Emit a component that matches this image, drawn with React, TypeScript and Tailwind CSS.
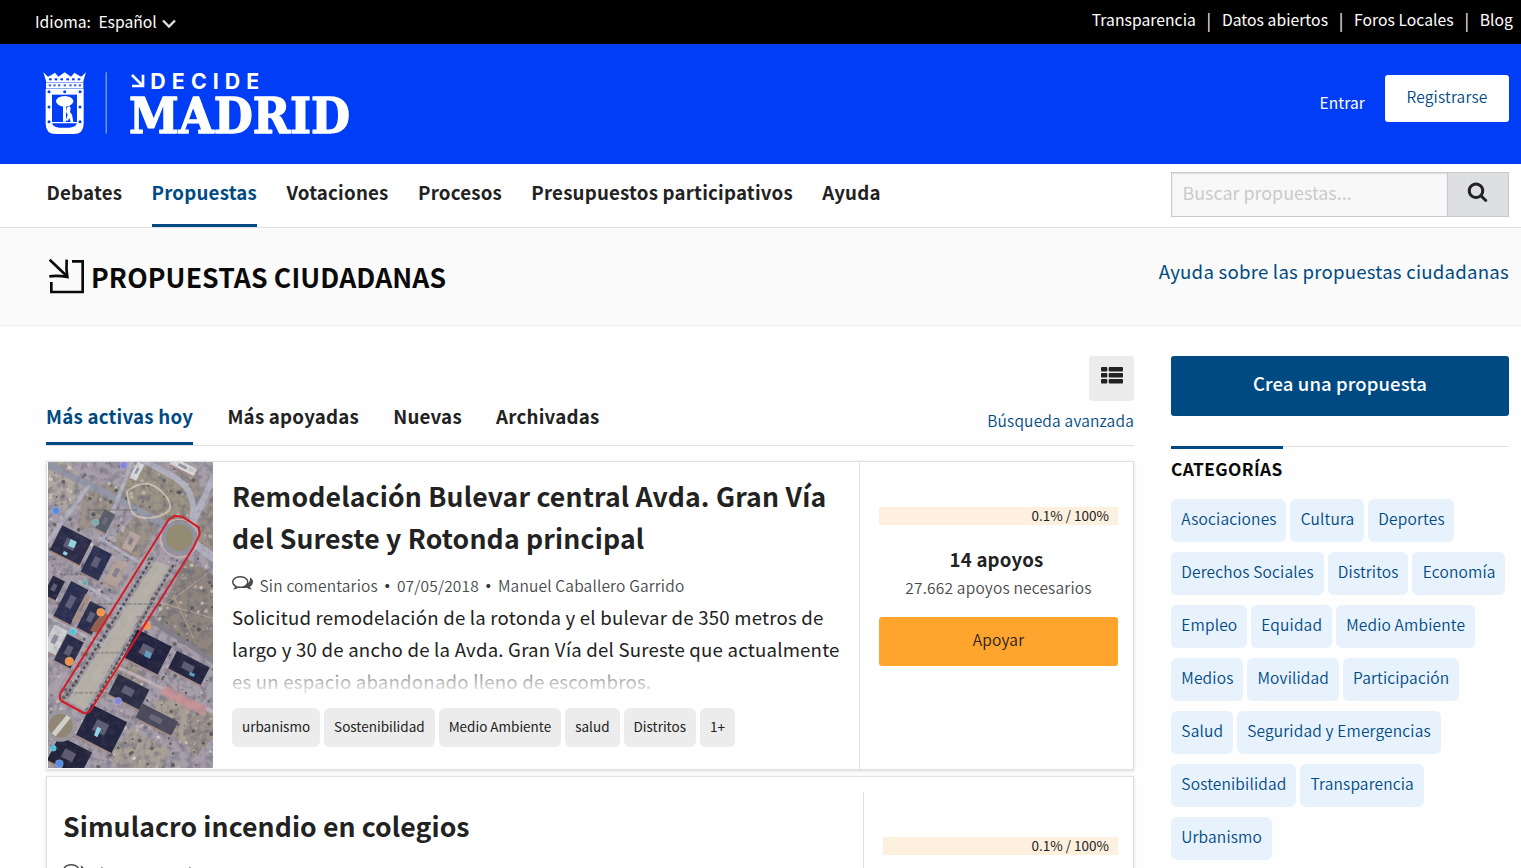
import type { ReactNode } from 'react';

function Logo() {
  return (
    <svg className="block h-[64px] w-[308px] overflow-visible" viewBox="130 214 924 192" role="img" aria-label="Decide Madrid">
      <g fill="#fff">
        <path d="M131 218l14 13 9-4 12-8 10 12 19-13 19 13 10-12 12 8 9 4 14-13-8 26v24H139v-24z" />
        <path d="M138 268h114v104q0 31-31 31h-52q-31 0-31-31z" />
        <rect x="318" y="218" width="3" height="184" opacity=".65" />
      </g>
      <g fill="#003df6">
        <rect x="157" y="285" width="75" height="82" />
        <path d="M157 371h75q-5 13-24 13h-28q-18 0-23-13z" />
        {[146, 239].map((x) => [276, 322, 366].map((y) => <circle key={`${x}-${y}`} cx={x + 2} cy={y} r="4.5" />))}
        <circle cx="195" cy="276" r="4.5" />
        {[152, 169, 186, 204, 221, 238].map((x) => <rect key={x} x={x - 4} y="236" width="8" height="6" />)}
        {[150, 164, 178, 195, 212, 226, 240].map((x) => <rect key={x} x={x - 3} y="254" width="7" height="6" opacity=".8" />)}
        <path d="M139 247h112v2H139zM139 265h112v2H139z" opacity=".6" />
      </g>
      <g fill="#fff">
        <ellipse cx="195" cy="305" rx="26" ry="16" />
        <path d="M190 316h9v50h-9zM201 324l8-5 4 6-2 12 6 8 4 22h-8l-4-12-6 10-4-4 5-16-5-8z" />
      </g>
      <g fill="none" stroke="#fff" strokeWidth="8">
        <path d="M397 226l31 31M430 225v34h-33" />
      </g>
      <text x="452" y="267" fill="#fff" fontFamily="Inter, sans-serif" fontWeight="700" fontSize="64" textLength="327" lengthAdjust="spacing">DECIDE</text>
      <text x="388" y="401" fill="#fff" stroke="#fff" strokeWidth="4" strokeLinejoin="round" fontFamily="'DejaVu Serif Condensed', 'DejaVu Serif', serif" fontWeight="700" fontSize="147" textLength="663" lengthAdjust="spacingAndGlyphs">MADRID</text>
    </svg>
  );
}

const COMMENTS =
  'M704 384q-153 0-286 52t-211.500 141-78.500 191q0 82 53 158t149 132l97 56-35 84q34-20 62-39l44-31 53 10q78 14 153 14 153 0 286-52t211.500-141 78.500-191-78.500-191-211.500-141-286-52zM704 256q191 0 353.500 68.500t256.500 186.500 94 257-94 257-256.500 186.500-353.500 68.500q-86 0-176-16-124 88-278 128-36 9-86 16h-3q-11 0-20.500-8t-11.500-21q-1-3-1-6.500t0.500-6.500 2-6l2.500-5t3.500-5.500 4-5 4.500-5 4-4.500q5-6 23-25t26-29.500 22.500-29 25-38.500 20.500-44q-124-72-195-177t-71-224q0-139 94-257t256.500-186.500 353.500-68.500zM1526 1169q10 24 20.500 44t25 38.500 22.500 29 26 29.500 23 25q1 1 4 4.500t4.500 5 4 5 3.500 5.500l2.500 5t2 6 0.500 6.500-1 6.500q-3 14-13 22t-22 7q-50-7-86-16-154-40-278-128-90 16-176 16-271 0-472-132 58 4 88 4 161 0 309-45t264-129q125-92 192-212t67-254q0-77-23-152 129 71 204 178t75 230q0 120-71 224.500t-195 176.500z';
const SEARCH =
  'M1216 832q0-185-131.5-316.5t-316.500-131.5-316.500 131.500-131.500 316.500 131.500 316.500 316.500 131.500 316.500-131.500 131.500-316.500zM1728 1664q0 52-38 90t-90 38q-54 0-90-38l-343-342q-179 124-399 124-143 0-273.500-55.500t-225-150-150-225-55.500-273.500 55.500-273.500 150-225 225-150 273.500-55.500 273.500 55.500 225 150 150 225 55.500 273.500q0 220-124 399l343 343q37 37 37 90z';

function rnd(i: number) {
  const v = Math.sin(i * 127.1 + 11.7) * 43758.5453;
  return v - Math.floor(v);
}

/* Aerial view of the boulevard, outlined in red */
function AerialView() {
  const specks = Array.from({ length: 620 }, (_, i) => ({
    x: 24 + rnd(i) * 495,
    y: 21 + rnd(i + 900) * 918,
    r: 1.5 + rnd(i + 1800) * 5,
    c: ['#3f4148', '#cbbcb4', '#77707a', '#d2c4c2', '#4c4f45', '#e0d8d4'][i % 6],
  }));
  const blocks: [number, number, number, number, string][] = [
    [92, 272, 100, 86, '#2c2c49'], [168, 325, 60, 92, '#2b2f4f'], [92, 445, 58, 120, '#2b2d50'], [152, 490, 50, 92, '#2b2d4b'],
    [42, 400, 40, 66, '#26273f'], [86, 590, 56, 90, '#2a2c48'], [44, 556, 44, 84, '#d0d1d4'], [322, 592, 116, 96, '#23243f'],
    [446, 640, 110, 62, '#24253f'], [266, 712, 104, 70, '#2c2d45'], [184, 822, 120, 106, '#24263f'], [350, 795, 120, 50, '#4b4a5a'],
    [88, 905, 110, 84, '#23243b'], [195, 200, 36, 66, '#595d68'], [290, 50, 22, 56, '#d9dadd'], [430, 36, 80, 26, '#dcdcda'],
    [228, 355, 44, 80, '#b5a39b'], [272, 262, 34, 60, '#b9a8a0'], [125, 460, 18, 90, '#a89286'],
  ];
  return (
    <svg className="block h-[306px] w-[165px] shrink-0" viewBox="24 21 495 918" preserveAspectRatio="none">
      <defs>
        <filter id="soft" x="0" y="0" width="100%" height="100%"><feGaussianBlur stdDeviation="2" /></filter>
        <filter id="grain" x="0" y="0" width="100%" height="100%">
          <feTurbulence type="fractalNoise" baseFrequency="0.05" numOctaves="4" seed="7" />
          <feColorMatrix values="0 0 0 0 0.12  0 0 0 0 0.12  0 0 0 0 0.18  0 2.8 0 0 -1.2" />
        </filter>
      </defs>
      <g filter="url(#soft)">
        <rect x="24" y="21" width="495" height="918" fill="#a69ea8" />
        <g fill="#9c9289">
          <path d="M24 21h60l50 60-50 90-60-30z" fill="#b0a8a0" />
          <path d="M240 90l80-60 80 30 60 80-20 60-60 0-120-60z" fill="#9c9484" />
          <path d="M440 310l80 50v260l-180-110z" fill="#90867d" />
          <path d="M130 120l70-40 50 20-60 100-80 30z" />
          <path d="M230 240l60-60 60 40-50 90-80-20z" />
          <path d="M470 200l50-80v180l-45-25z" />
          <path d="M340 740l70-40 90 90-60 80-90-50z" fill="#aaa096" />
          <path d="M215 880l60-60 110 60-10 60H225z" fill="#a89f97" />
          <path d="M400 50l70 10 20 60-30 30z" />
          <path d="M220 660l50-40 60 60-90 60z" />
          <path d="M430 830l50-70 39 20v70l-60 60z" />
        </g>
        {specks.map((s, i) => <circle key={i} cx={s.x} cy={s.y} r={s.r} fill={s.c} opacity=".7" />)}
        <rect x="24" y="21" width="495" height="918" filter="url(#grain)" opacity=".4" />
        <g fill="none" stroke="#b3b2c0" strokeLinecap="round">
          <path d="M24 30l130 62 220 115" strokeWidth="20" stroke="#9497a5" />
          <path d="M519 70L455 210M300 10l100 55q60 35 60 100v40" strokeWidth="18" />
          <path d="M24 260L145 95M275 20L190 250" strokeWidth="12" />
          <path d="M470 270l60 45" strokeWidth="24" />
          <path d="M24 480l160 90M120 380l130 80M180 250l130 80" strokeWidth="10" />
          <path d="M330 490l190 130" strokeWidth="14" stroke="#85828d" />
          <path d="M100 780L400 280M45 700L370 230" strokeWidth="16" stroke="#aba2ac" />
          <path d="M240 640l280 130M150 770L280 560" strokeWidth="10" stroke="#bfb0b7" />
        </g>
        <path d="M375 690l125 65-8 28-132-65z" fill="#c49497" />
        <path d="M260 110q60-50 110 5t-20 70-80-30z" fill="none" stroke="#cabdb2" strokeWidth="6" />
        <path d="M360 460l150-110M400 420l60 130M350 440l170 50" fill="none" stroke="#b3a597" strokeWidth="3" />
        <path d="M338 308L75 730M400 330L150 765" stroke="#4f504e" strokeWidth="7" strokeDasharray="9 7" />
        {blocks.map(([x, y, w, h, c], i) => (
          <g key={i} transform={`translate(${x} ${y}) rotate(27)`}>
            <rect x={-w / 2} y={-h / 2} width={w} height={h} fill={c} />
            <rect x={-w / 5} y={-h / 5} width={w / 3} height={h / 3} fill="#77748a" opacity=".7" />
            <path d={`M${-w / 2} ${h / 2}h${w}`} stroke="#a58d88" strokeWidth="6" />
          </g>
        ))}
        <rect x="24" y="21" width="495" height="918" filter="url(#grain)" opacity=".2" />
        <path d="M345 318l45 14L135 765l-52-30z" fill="#b7b4a8" opacity=".85" />
        <path d="M398 338L160 740" stroke="#6f6f6e" strokeWidth="3" strokeDasharray="14 6" />
        <circle cx="418" cy="250" r="52" fill="#9092a0" />
        <circle cx="418" cy="250" r="57" fill="none" stroke="#c9b1b3" strokeWidth="4" />
        <circle cx="418" cy="248" r="40" fill="#948b73" />
        <circle cx="62" cy="812" r="48" fill="#9a979e" />
        <circle cx="62" cy="812" r="36" fill="#918673" />
        <path d="M35 835l45-55 12 9-45 55z" fill="#d0cfca" />
        <g fill="#8fd3e2">
          <path d="M92 252l18 8-8 20-18-8zM72 288l12 6-6 8-10-5zM172 815l12 6-12 26-10-6z" />
          <path d="M318 585l18 10-6 16-18-8zM450 650l16 8-5 8-14-7z" fill="#5f9fc4" />
        </g>
        <path d="M165 500l25-30 15 10-30 55-25-8z" fill="#94604f" />
      </g>
      <g fill="none" stroke="#55554f" strokeOpacity=".35" strokeWidth="6" strokeDasharray="9 3 14 4">
        <path d="M160 447h185M62 593h180M75 713h150M290 486h85M145 165h150M60 358h105" />
      </g>
      <g stroke="#fff" strokeOpacity=".3" strokeWidth="2">
        <circle cx="182" cy="472" r="12" fill="#f3924a" /><circle cx="320" cy="512" r="12" fill="#f3924a" /><circle cx="88" cy="619" r="13" fill="#f3924a" />
        <circle cx="48" cy="167" r="11" fill="#568be0" /><circle cx="251" cy="31" r="11" fill="#8385dc" /><circle cx="234" cy="738" r="11" fill="#8385dc" /><circle cx="58" cy="926" r="12" fill="#568be0" />
        <circle cx="167" cy="202" r="10" fill="#79aead" /><circle cx="134" cy="383" r="9" fill="#6fa7a0" /><circle cx="98" cy="530" r="9" fill="#45c4d8" /><circle cx="40" cy="880" r="9" fill="#45c4d8" />
      </g>
      <path d="M387 193l18-11 22 3 50 33 2 20-20 42L154 762q-9 15-23 12l-66-36q-10-9-3-24z" fill="none" stroke="#d21c26" strokeWidth="6" strokeLinejoin="round" />
    </svg>
  );
}

function Meta({ children }: { children: ReactNode }) {
  return (
    <div className="flex h-6 items-center text-[15.5px] leading-6 font-[350] tracking-[0.18px] text-[#4a4a4a]">
      <svg className="mr-[6.5px] h-[21px] w-[21px] -translate-y-[2px]" viewBox="0 0 1792 1792" fill="currentColor"><path d={COMMENTS} /></svg>
      {children}
    </div>
  );
}

const Dot = () => <span className="w-[19px] text-center font-bold text-[#333]">•</span>;

function Progress() {
  return (
    <div className="h-[18px] bg-[#fef0df] pr-[9px] text-right text-[13.5px] leading-[17px] text-[#222]">0.1% / 100%</div>
  );
}

const nav = ['Debates', 'Propuestas', 'Votaciones', 'Procesos', 'Presupuestos participativos', 'Ayuda'];
const tabs = ['Más activas hoy', 'Más apoyadas', 'Nuevas', 'Archivadas'];
const tags = ['urbanismo', 'Sostenibilidad', 'Medio Ambiente', 'salud', 'Distritos', '1+'];
const categories = [
  ['Asociaciones', 'Cultura', 'Deportes'],
  ['Derechos Sociales', 'Distritos', 'Economía'],
  ['Empleo', 'Equidad', 'Medio Ambiente'],
  ['Medios', 'Movilidad', 'Participación'],
  ['Salud', 'Seguridad y Emergencias'],
  ['Sostenibilidad', 'Transparencia'],
  ['Urbanismo'],
];
const links = ['Transparencia', 'Datos abiertos', 'Foros Locales', 'Blog'];

export default function App() {
  return (
    <div className="h-[868px] w-full overflow-hidden bg-[#fefefe] font-['Noto_Sans_CJK_SC','Noto_Sans',sans-serif] text-[#222]">
      <div className="flex h-11 items-start justify-between bg-black pr-2 pl-[35px] text-[15.7px] text-white">
        <div className="flex items-center pt-[10px] leading-6">
          <span>Idioma:</span>
          <span className="ml-[7.500px]">Español</span>
          <svg className="mt-1 ml-[5px] h-[10px] w-[14px]" viewBox="0 0 14 10" fill="none" stroke="#ddd" strokeWidth="2.4"><path d="M1 1.500l6 6 6-6" /></svg>
        </div>
        <div className="flex pt-2 leading-6 tracking-[0.04px]">
          {links.map((l, i) => (
            <span key={l} className="flex">
              {i > 0 && <span className="w-[26px] text-center text-[17px]">|</span>}
              <span>{l}</span>
            </span>
          ))}
        </div>
      </div>

      <header className="flex h-[120px] items-start justify-between bg-[#003df6] pr-3 pl-[43px]">
        <div className="pt-[27px]"><Logo /></div>
        <div className="flex items-start pt-[31px] text-[15.5px] tracking-[0.12px]">
          <span className="pt-[15px] pr-5 leading-6 text-white">Entrar</span>
          <button className="h-[47px] w-[124px] rounded-[3px] bg-white pb-[5px] leading-6 font-[350] tracking-[0.2px] text-[#004a83]">Registrarse</button>
        </div>
      </header>

      <nav className="flex h-16 items-start justify-between border-b border-[#dee0e3] bg-white pr-3 pl-[46.5px]">
        <ul className="flex gap-[29.4px] text-[18.7px] font-bold tracking-[0.2px]">
          {nav.map((n, i) => (
            <li key={n} className={i === 1 ? 'h-[63px] border-b-[3px] border-[#004a83] pt-4 leading-6 whitespace-nowrap text-[#004a83]' : 'pt-4 leading-6 whitespace-nowrap'}>{n}</li>
          ))}
        </ul>
        <div className="mt-2 flex h-[45px] w-[338px] border border-[#cacaca]">
          <div className="flex-1 bg-[#f8f8f8] pt-[7px] pl-[10.5px] text-[17.9px] leading-6 text-[#cacaca] shadow-[inset_0_1px_2px_rgba(10,10,10,0.1)]">Buscar propuestas...</div>
          <div className="flex w-[61px] justify-center border-l border-[#cacaca] bg-[#dedfe3] pt-2 pr-px">
            <svg className="h-[21px] w-[21px]" viewBox="0 0 1792 1792" fill="#222"><path d={SEARCH} /></svg>
          </div>
        </div>
      </nav>

      <section className="flex h-[98px] items-start justify-between border-b border-[#eee] bg-[#fafafa] pr-3 pl-12">
        <div className="flex">
          <svg className="mt-[29.5px] h-[37px] w-[37px]" viewBox="54 278 111 111" fill="none" stroke="#0a0a0a" strokeWidth="8">
            <path d="M59 283l52 50M110 283q-2 28 2 52q-28-5-54-2M126 288h32v92H64v-30" />
          </svg>
          <h1 className="pt-[29px] pl-[6px] text-[26.6px] leading-[40px] font-bold tracking-[0.13px] text-[#0a0a0a]">PROPUESTAS CIUDADANAS</h1>
        </div>
        <a className="pt-[31px] text-[18.6px] leading-6 tracking-[0.24px] text-[#004a83]">Ayuda sobre las propuestas ciudadanas</a>
      </section>

      <div className="flex pt-[30px] pl-[46px]">
        <main className="w-[1088px]">
          <div className="flex h-[90px] items-end justify-between border-b border-[#dee0e3]">
            <ul className="flex gap-[34.2px] text-[18.7px] leading-6 font-bold tracking-[0.23px]">
              {tabs.map((t, i) => (
                <li key={t} className={i === 0 ? 'h-[41px] border-b-[3px] border-[#004a83] text-[#004a83]' : 'h-[41px]'}>{t}</li>
              ))}
            </ul>
            <div className="flex h-[89px] flex-col items-end">
              <div className="flex h-[45px] w-[45px] justify-center rounded-[3px] bg-[#ececec] pt-[11px]">
                <svg className="h-[17px] w-[22px]" viewBox="0 0 22 17" fill="#222">
                  {[0, 6, 12].map((y) => <g key={y}><rect y={y} width="6.300" height="4.600" rx="1" /><rect x="7.700" y={y} width="14.300" height="4.600" rx="1" /></g>)}
                </svg>
              </div>
              <a className="mt-[7px] text-[15.5px] leading-6 font-[350] tracking-[0.19px] text-[#004a83]">Búsqueda avanzada</a>
            </div>
          </div>

          <article className="mt-[15px] flex h-[309px] border border-[#dee0e3] bg-white pl-px shadow-[0_1px_3px_rgba(0,0,0,0.15)]">
            <AerialView />
            <div className="w-[646px] pt-[13px] pl-[19px]">
              <h3 className="text-[26.6px] leading-[42px] font-bold tracking-[0.17px] whitespace-nowrap">Remodelación Bulevar central Avda. Gran Vía<br />del Sureste y Rotonda principal</h3>
              <div className="mt-[14px]"><Meta>Sin comentarios<Dot />07/05/2018<Dot />Manuel Caballero Garrido</Meta></div>
              <div className="relative mt-1 h-24 text-[18.6px] leading-8 tracking-[0.22px] whitespace-nowrap">
                Solicitud remodelación de la rotonda y el bulevar de 350 metros de<br />largo y 30 de ancho de la Avda. Gran Vía del Sureste que actualmente<br />es un espacio abandonado lleno de escombros.
                <div className="absolute inset-x-0 bottom-0 h-[38px] bg-linear-to-b from-white/20 to-white" />
              </div>
              <div className="mt-[11px] flex gap-1 text-[13.5px]">
                {tags.map((t) => <span key={t} className="h-[39px] rounded-[6px] bg-[#ececec] px-[10px] leading-[37px]">{t}</span>)}
              </div>
            </div>
            <div className="flex-1 border-l border-[#dee0e3] pt-[45px] pr-[15px] pl-[19px] text-center">
              <Progress />
              <p className="mt-[22px] pr-1 text-[18.6px] leading-6 font-bold tracking-[0.22px]">14 apoyos</p>
              <p className="mt-1 text-[15.5px] leading-6 font-[350] tracking-[0.19px] text-[#4a4a4a]">27.662 apoyos necesarios</p>
              <button className="mt-[18px] block h-[49px] w-full rounded-[3px] bg-[#ffa42d] pb-[5px] text-[15.5px] leading-6 font-[350] tracking-[0.2px]">Apoyar</button>
            </div>
          </article>

          <article className="mt-[6px] flex h-[309px] border border-[#dee0e3] bg-white shadow-[0_1px_3px_rgba(0,0,0,0.15)]">
            <div className="w-[816px] pt-[28px] pl-[16px]">
              <h3 className="text-[26.6px] leading-[42px] font-bold tracking-[0.1px]">Simulacro incendio en colegios</h3>
              <div className="mt-[14px]"><Meta>Sin comentarios<Dot />07/05/2018</Meta></div>
            </div>
            <div className="mt-[15px] flex-1 border-l border-[#dee0e3] pt-[45px] pr-[15px] pl-[19px]"><Progress /></div>
          </article>
        </main>

        <aside className="ml-[37px] w-[338px]">
          <button className="block h-[60px] w-full rounded-[3px] bg-[#004a83] pb-[6px] text-[18.5px] leading-6 font-medium tracking-[0.1px] text-white">Crea una propuesta</button>
          <div className="mt-[30px] flex border-t border-[#dee0e3]">
            <h2 className="-mt-px border-t-[3px] border-[#004a83] pt-2 text-[17.3px] leading-6 font-bold tracking-[0.42px] text-[#0a0a0a]">CATEGORÍAS</h2>
          </div>
          <div className="mt-[18px] flex flex-col gap-[10px] text-[15.5px] font-[350] tracking-[0.17px] text-[#004a83]">
            {categories.map((row) => (
              <div key={row[0]} className="flex gap-1">
                {row.map((c) => <span key={c} className="h-[43px] rounded-[6px] bg-[#e7f2fc] pr-[9.700px] pl-[10.300px] leading-[39px] whitespace-nowrap">{c}</span>)}
              </div>
            ))}
          </div>
        </aside>
      </div>
    </div>
  );
}
